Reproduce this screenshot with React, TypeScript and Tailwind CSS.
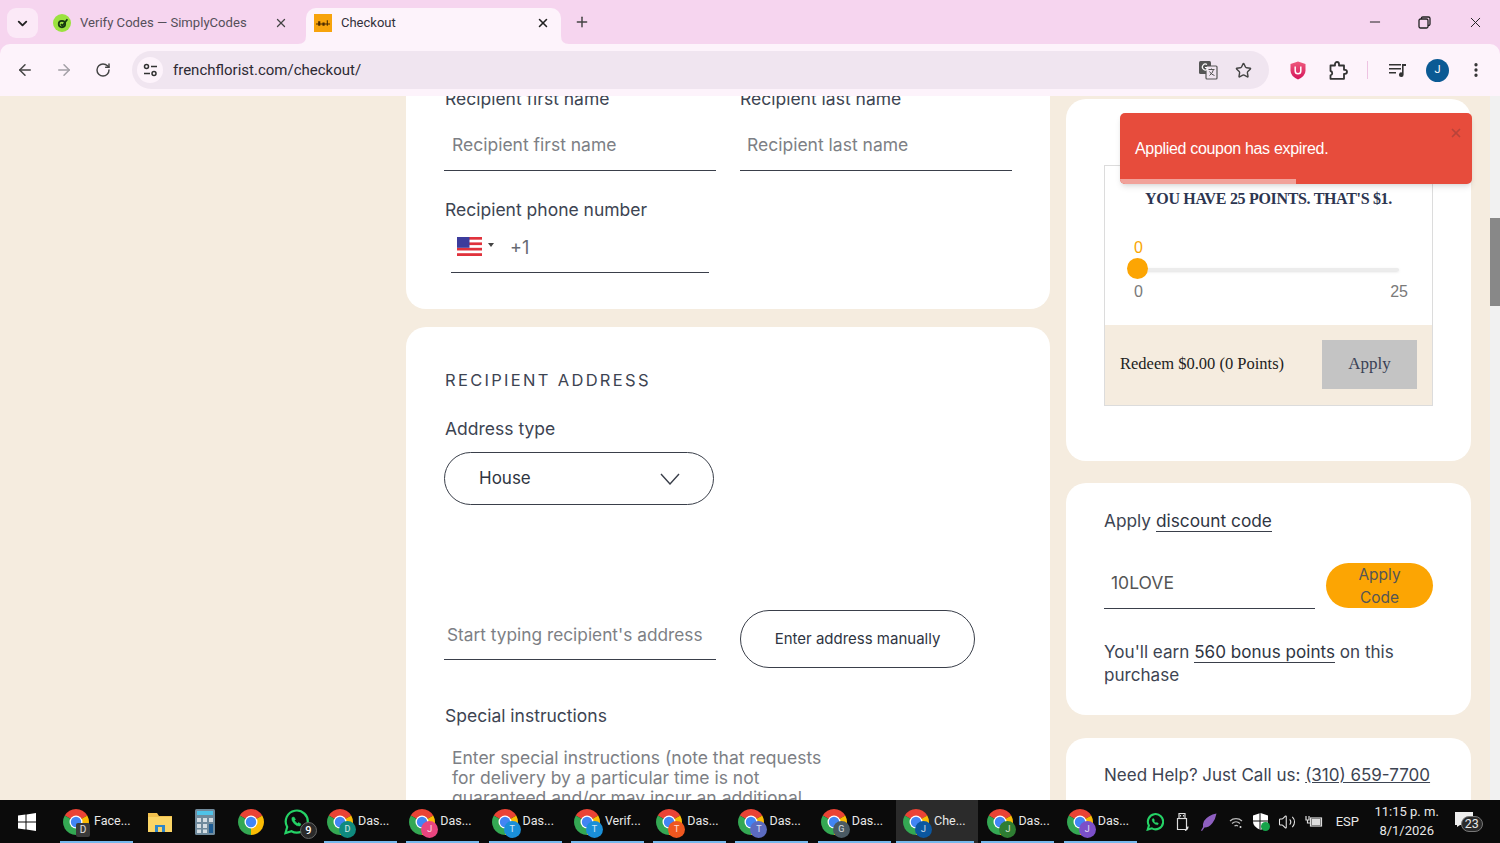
import { ArrowLeft, ArrowRight, RotateCw, X, Plus, ChevronDown, Star, EllipsisVertical, Minus, Volume2 } from 'lucide-react';

const FONT = "font-['Inter','Liberation_Sans',sans-serif]";

const taskItems = [
  { label: 'Das...', letter: 'D', badge: 'bg-[#0f8a7e]', cls: 'w-[73px] pl-[3px]' },
  { label: 'Das...', letter: 'J', badge: 'bg-[#e8457f]', cls: 'w-[73px] pl-[3px]' },
  { label: 'Das...', letter: 'T', badge: 'bg-[#1a8fd8]', cls: 'w-[73px] pl-[3px]' },
  { label: 'Verif...', letter: 'T', badge: 'bg-[#1a8fd8]', cls: 'w-[73px] pl-[3px]' },
  { label: 'Das...', letter: 'T', badge: 'bg-[#f0571f]', cls: 'w-[73px] pl-[3px]' },
  { label: 'Das...', letter: 'T', badge: 'bg-[#5c6bc0]', cls: 'w-[73px] pl-[3px]' },
  { label: 'Das...', letter: 'G', badge: 'bg-[#4a5a63]', cls: 'w-[73px] pl-[3px]' },
  { label: 'Che...', letter: 'J', badge: 'bg-[#0b57a0]', cls: 'w-[82px] pl-[7px] -ml-[4px] -mr-[6px] bg-[#2b2b2b]', line: 'right-[4px]' },
  { label: 'Das...', letter: 'J', badge: 'bg-[#2e7d32]', cls: 'w-[73px] pl-[6px]' },
  { label: 'Das...', letter: 'J', badge: 'bg-[#7b4fc9]', cls: 'w-[73px] pl-[3px]' },
];

function ChromeIcon({ size = 26 }: { size?: number }) {
  return (
    <svg width={size} height={size} viewBox="4 4 40 40">
      <path d="M24 24 L6.7 14 A20 20 0 0 1 41.3 14 Z" fill="#ea4335" />
      <path d="M24 24 L41.3 14 A20 20 0 0 1 24 44 Z" fill="#fbbc04" />
      <path d="M24 24 L24 44 A20 20 0 0 1 6.7 14 Z" fill="#34a853" />
      <circle cx="24" cy="24" r="10" fill="#fff" />
      <circle cx="24" cy="24" r="8" fill="#4285f4" />
    </svg>
  );
}

function TaskItem({ label, letter, badge, cls, line }: { label: string; letter: string; badge: string; cls: string; line?: string }) {
  return (
    <div className={`relative h-full shrink-0 flex items-center ${cls}`}>
      <div className="relative w-[26px] h-[26px] shrink-0">
        <ChromeIcon />
        <span className={`absolute -right-[3px] -bottom-[3px] w-[17px] h-[17px] rounded-full text-[9px] leading-[17px] text-center text-white/80 ${badge}`}>{letter}</span>
      </div>
      <span className="ml-[5px] text-[12.5px] text-[#e8e8e8] whitespace-nowrap">{label}</span>
      <span className={`absolute left-0 bottom-0 h-[2px] bg-[#76b9ed] ${line ?? 'right-0'}`} />
    </div>
  );
}

function UnderlineInput({ text, className }: { text: string; className: string }) {
  return <div className={`border-b border-[#3a3f4a] text-[#7d7f85] ${className}`}>{text}</div>;
}

function UsFlag() {
  return (
    <svg width="25" height="19" viewBox="0 0 25 19">
      <rect width="25" height="19" fill="#fff" />
      <rect y="0" width="25" height="2.7" fill="#e0323c" />
      <rect y="5.4" width="25" height="2.7" fill="#e0323c" />
      <rect y="10.8" width="25" height="2.7" fill="#e0323c" />
      <rect y="16.2" width="25" height="2.8" fill="#e0323c" />
      <rect width="12.5" height="10.8" fill="#3c3c9c" />
    </svg>
  );
}

function WhatsApp({ size, weight }: { size: number; weight: number }) {
  return (
    <svg width={size} height={size} viewBox="0 0 26 26" fill="none" stroke="#25d366" strokeWidth={weight}>
      <path d="M2.500 24 L4.200 18 A11 11 0 1 1 8.500 22.200 Z" />
      <path d="M9 8.500 Q8 11 11 14.500 Q14 17.500 17 17 L18 15 L15.500 13.500 L14.500 14.500 Q12.500 13.500 11.500 11.500 L12.500 10.500 L11 8 Z" fill="#25d366" strokeWidth="0.500" />
    </svg>
  );
}

function TabBar() {
  return (
    <div className="h-[44px] shrink-0 flex items-end relative">
      <div className="absolute left-[7px] top-[8px] w-[31px] h-[30px] rounded-[9px] bg-[#fbe9f7] flex items-center justify-center">
        <ChevronDown size={15} strokeWidth={3} className="text-[#222]" />
      </div>
      <div className="ml-[45px] w-[261px] h-[38px] flex items-center pb-[4px] text-[13.1px] text-[#55505a]">
        <div className="w-[18px] h-[18px] rounded-full bg-[#9be23f] ml-[8px] flex items-center justify-center shrink-0">
          <svg width="13" height="13" viewBox="0 0 12 12" fill="none" stroke="#163a10" strokeWidth="1.6">
            <circle cx="5.5" cy="6.5" r="3" />
            <path d="M4.500 6.500 L6 8 L10.500 2" />
          </svg>
        </div>
        <span className="ml-[9px] font-['Roboto',sans-serif] w-[194px] whitespace-nowrap">Verify Codes — SimplyCodes</span>
        <X size={14} strokeWidth={2.2} className="text-[#444]" />
      </div>
      <div className="relative w-[255px] h-[36px] bg-[#fdf3fb] rounded-t-[10px] flex items-center pl-[8px] pb-[6px] text-[13px] text-[#33303a]">
        <svg width="8" height="8" viewBox="0 0 8 8" className="absolute -left-[8px] bottom-0" fill="#fdf3fb">
          <path d="M8 0V8H0Q8 8 8 0Z" />
        </svg>
        <svg width="8" height="8" viewBox="0 0 8 8" className="absolute -right-[8px] bottom-0" fill="#fdf3fb">
          <path d="M0 0V8H8Q0 8 0 0Z" />
        </svg>
        <div className="w-[18px] h-[18px] bg-[#f7a30c] flex items-center justify-center shrink-0">
          <svg width="14" height="7" viewBox="0 0 13 6" fill="#4a2a00">
            <path d="M0 3h13v1H0zM2 1h2v4H2zM6 2h2v3H6zM10 0h1v5h-1z" />
          </svg>
        </div>
        <span className="ml-[9px] font-['Roboto',sans-serif] w-[195px]">Checkout</span>
        <X size={14} strokeWidth={2.6} className="text-[#222]" />
      </div>
      <Plus size={16} strokeWidth={2.2} className="ml-[13px] mb-[14px] text-[#444]" />
      <div className="ml-auto flex items-center h-full self-start text-[#222]">
        <Minus size={16} strokeWidth={1.5} className="mr-[35px]" />
        <svg width="13" height="13" viewBox="0 0 13 13" fill="none" stroke="#222" strokeWidth="1.3" className="mr-[36px]">
          <rect x="1" y="3" width="9" height="9" rx="1.5" />
          <path d="M3.500 3V2.200Q3.500 1 4.800 1H10.500Q12 1 12 2.500V8.300Q12 9.500 10 9.500" />
        </svg>
        <X size={17} strokeWidth={1.4} className="mr-[16px]" />
      </div>
    </div>
  );
}

function Toolbar() {
  return (
    <div className="h-[52px] shrink-0 bg-[#fdf3fb] rounded-t-[10px] flex items-center text-[#444]">
      <ArrowLeft size={18} strokeWidth={2} className="ml-[16px]" />
      <ArrowRight size={18} strokeWidth={2} className="ml-[21px] text-[#a3a0a6]" />
      <RotateCw size={16} strokeWidth={2.2} className="ml-[22px]" />
      <div className="ml-[21px] w-[1137px] h-[38px] rounded-full bg-[#f0e5f0] flex items-center">
        <div className="ml-[5px] w-[26px] h-[26px] rounded-full bg-[#fdf3fb] flex items-center justify-center">
          <svg width="15" height="14" viewBox="0 0 15 14" fill="none" stroke="#333" strokeWidth="1.5">
            <circle cx="3.5" cy="3.5" r="2" />
            <path d="M8 3.500h6M1 10.500h6" />
            <circle cx="11" cy="10.5" r="2" />
          </svg>
        </div>
        <span className="ml-[10px] text-[15px] font-['Roboto',sans-serif] text-[#2d2a33]">frenchflorist.com/checkout/</span>
        <svg width="20" height="20" viewBox="0 0 20 20" className="ml-auto">
          <rect x="1" y="1" width="12" height="13" rx="1.5" fill="#555" />
          <rect x="8" y="6" width="11" height="13" rx="1" fill="#f0e5f0" stroke="#555" strokeWidth="1.2" />
          <path d="M10.500 9.500h6M13.500 8.500v1M15.500 9.500q-1 4-4 6M11.500 11.500q1.500 3 5 4" stroke="#555" strokeWidth="1" fill="none" />
          <path d="M9 4.500a3 3 0 1 0 0 5V7.500H7" stroke="#fff" strokeWidth="1.1" fill="none" />
        </svg>
        <Star size={17} strokeWidth={2} className="ml-[17px] mr-[17px]" />
      </div>
      <svg width="16" height="19" viewBox="0 0 16 19" className="ml-[21px]">
        <defs>
          <linearGradient id="ublock" x1="0" y1="0" x2="0" y2="1">
            <stop offset="0" stopColor="#ef5a7d" />
            <stop offset="1" stopColor="#d4145a" />
          </linearGradient>
        </defs>
        <path d="M8 0.500 L15.500 3 V9.500 Q15.500 15 8 18.500 Q0.500 15 0.500 9.500 V3 Z" fill="url(#ublock)" />
        <path d="M5.200 5.500v4.500a2.800 2.800 0 0 0 5.600 0V5.500" fill="none" stroke="#fff" strokeWidth="1.5" />
      </svg>
      <svg width="19" height="19" viewBox="0 0 19 19" fill="none" stroke="#333" strokeWidth="1.8" className="ml-[23px]">
        <path d="M1.500 4.500h4.500V3a2 2 0 0 1 4 0v1.500h5v4.300h1a2 2 0 0 1 0 4h-1v5h-13.500v-3.500a2.200 2.200 0 0 0 0-4.300z" strokeLinejoin="round" />
      </svg>
      <div className="ml-[19px] w-[1px] h-[18px] bg-[#eec3e2]" />
      <svg width="18" height="14" viewBox="0 0 18 14" className="ml-[21px]" fill="#333">
        <path d="M0 1h12v1.600H0zM0 5h12v1.600H0zM0 9h7v1.600H0z" />
        <path d="M13 1h4v2h-2.400v8.500a2.300 2.300 0 1 1-1.600-2.100z" />
      </svg>
      <div className="ml-[19px] w-[23px] h-[23px] rounded-full bg-[#0b5a94] text-white text-[11px] flex items-center justify-center font-['Roboto',sans-serif]">J</div>
      <EllipsisVertical size={18} strokeWidth={2.4} className="ml-[18px] text-[#333]" />
    </div>
  );
}

function CheckoutColumn() {
  return (
    <div className={`w-[644px] shrink-0 text-[#3d4452] ${FONT}`}>
      <div className="h-[213px] bg-white rounded-b-[20px] pl-[38px] overflow-hidden">
        <div className="flex gap-[24px] -mt-[8px]">
          <div className="w-[272px]">
            <div className="pl-[1px] text-[17.5px] leading-[22px]">Recipient first name</div>
            <UnderlineInput text="Recipient first name" className="mt-[17px] h-[44px] pl-[8px] pt-[5px] text-[17.5px]" />
          </div>
          <div className="w-[272px]">
            <div className="text-[17.5px] leading-[22px]">Recipient last name</div>
            <UnderlineInput text="Recipient last name" className="mt-[17px] h-[44px] pl-[7px] pt-[5px] text-[17.5px]" />
          </div>
        </div>
        <div className="mt-[28px] pl-[1px] text-[17.5px] leading-[22px]">Recipient phone number</div>
        <div className="mt-[9px] ml-[7px] w-[258px] h-[43px] border-b border-[#3a3f4a] flex items-center pl-[6px] pb-[5px]">
          <div className="mb-[4px]"><UsFlag /></div>
          <span className="ml-[6px] mb-[7px] w-0 h-0 border-x-[3.5px] border-x-transparent border-t-[4px] border-t-[#444]" />
          <span className="ml-[16px] mb-[2px] text-[18px] text-[#666a72]">+1</span>
        </div>
      </div>
      <div className="mt-[18px] h-[520px] bg-white rounded-t-[20px] pl-[38px] pt-[42px]">
        <div className="pl-[1px] text-[16.5px] leading-[22px] tracking-[0.14em] text-[#3d4452]">RECIPIENT ADDRESS</div>
        <div className="mt-[27px] pl-[1px] text-[17.5px] leading-[22px]">Address type</div>
        <div className="mt-[12px] w-[270px] h-[53px] rounded-full border border-[#3a3f4a] flex items-center pl-[34px] pr-[33px] text-[17px] text-[#2f3542]">
          <span>House</span>
          <svg width="20" height="12" viewBox="0 0 20 12" fill="none" stroke="#3a3f4a" strokeWidth="1.4" className="ml-auto">
            <path d="M1 1 L10 11 L19 1" />
          </svg>
        </div>
        <div className="mt-[105px] flex gap-[24px] items-start">
          <UnderlineInput text="Start typing recipient's address" className="w-[272px] h-[50px] pl-[3px] pt-[12px] text-[17.3px] whitespace-nowrap" />
          <div className="w-[235px] h-[58px] rounded-full border border-[#3a3f4a] flex items-center justify-center text-[15px] text-[#2f3542]">Enter address manually</div>
        </div>
        <div className="mt-[37px] pl-[1px] text-[17.5px] leading-[22px]">Special instructions</div>
        <div className="mt-[21px] ml-[8px] w-[380px] text-[17.5px] leading-[20px] text-[#7d7f85]">
          Enter special instructions (note that requests for delivery by a particular time is not guaranteed and/or may incur an additional
        </div>
      </div>
    </div>
  );
}

function SideColumn() {
  return (
    <div className={`relative w-[405px] shrink-0 ml-[16px] text-[#3d4452] ${FONT}`}>
      <div className="mt-[3px] h-[362px] bg-white rounded-[20px] pl-[38px] pt-[66px]">
        <div className="w-[329px] h-[241px] border border-[#dcdcdc] flex flex-col">
          <div className="h-[159px] pt-[23px] relative">
            <div className="text-center text-[16px] leading-[20px] font-bold text-[#2d3550] font-['Liberation_Serif',serif] tracking-[-0.02em]">YOU HAVE 25 POINTS. THAT'S $1.</div>
            <div className="mt-[29px] pl-[33px] text-[#f9a602] text-[16px] leading-[20px] font-['Liberation_Sans',sans-serif]">
              <span className="relative -left-[4px]">0</span>
            </div>
            <div className="relative ml-[33px] mt-[10px] w-[261px] h-[3px] bg-[#ececec] rounded-full shadow-sm">
              <span className="absolute -left-[11px] -top-[10px] w-[21px] h-[21px] rounded-full bg-[#fca503]" />
            </div>
            <div className="mt-[11px] ml-[29px] mr-[24px] flex justify-between text-[16px] leading-[20px] text-[#7a7a7a] font-['Liberation_Sans',sans-serif]">
              <span>0</span>
              <span>25</span>
            </div>
          </div>
          <div className="flex-1 bg-[#f5ecdf] flex items-center pl-[15px] pr-[15px] pb-[2px] font-['Liberation_Serif',serif]">
            <span className="text-[16.5px] text-[#222]">Redeem $0.00 (0 Points)</span>
            <div className="ml-auto w-[95px] h-[49px] bg-[#c4c4c4] flex items-center justify-center text-[17px] text-[#3a4256]">Apply</div>
          </div>
        </div>
      </div>
      <div className="mt-[22px] h-[232px] bg-white rounded-[20px] pl-[38px] pt-[26px] pr-[38px]">
        <div className="text-[17.3px] leading-[24px]">
          Apply <span className="border-b border-[#3a3f4a] text-[#2f3542]">discount code</span>
        </div>
        <div className="mt-[30px] flex items-start gap-[11px]">
          <div className="w-[211px] h-[46px] border-b border-[#3a3f4a] pl-[7px] pt-[7px] text-[17.5px] text-[#555]">10LOVE</div>
          <div className="w-[107px] h-[45px] px-[24px] rounded-full bg-[#fca503] flex items-center justify-center text-center text-[15.5px] leading-[23px] text-[#555]">Apply Code</div>
        </div>
        <div className="mt-[31px] text-[17.1px] leading-[23px]">
          You'll earn <span className="border-b border-[#3a3f4a] text-[#2f3542]">560 bonus points</span> on this purchase
        </div>
      </div>
      <div className="mt-[23px] h-[120px] bg-white rounded-t-[20px] pl-[38px] pt-[25px] text-[17px] leading-[24px] whitespace-nowrap">
        Need Help? Just Call us: <span className="underline">(310) 659-7700</span>
      </div>
      <div className="absolute left-[54px] top-[17px] w-[352px] h-[71px] bg-[#e74c3c] rounded-[5px] shadow-md overflow-hidden font-['Liberation_Sans',sans-serif]">
        <div className="pl-[15px] pt-[26px] text-[16px] leading-[20px] text-white tracking-[-0.02em]">Applied coupon has expired.</div>
        <X size={14} strokeWidth={3} className="absolute right-[9px] top-[13px] text-[#b8433a]" />
        <div className="absolute left-0 bottom-0 w-[176px] h-[5px] bg-[#f1a29a]" />
      </div>
    </div>
  );
}

function Taskbar() {
  return (
    <div className="h-[43px] shrink-0 bg-[#0b0b0b] flex items-center text-white font-['Roboto',sans-serif] relative">
      <svg width="18" height="18" viewBox="0 0 18 18" fill="#fff" className="ml-[18px]">
        <path d="M0 2.500l7.500-1v7H0zM8.500 1.400L18 0v8.500H8.500zM0 9.500h7.500v7L0 15.500zM8.500 9.500H18V18l-9.500-1.400z" />
      </svg>
      <div className="ml-[24px] flex items-center h-full">
        <div className="relative h-full w-[73px] flex items-center pl-[3px]">
          <div className="relative w-[26px] h-[26px]">
            <ChromeIcon />
            <span className="absolute -right-[1px] -bottom-[2px] w-[14px] h-[14px] rounded-[2px] bg-[#3a3a3a] text-[10px] leading-[14px] text-center text-white/85">D</span>
          </div>
          <span className="ml-[5px] text-[12.5px] text-[#e8e8e8]">Face...</span>
          <span className="absolute left-0 right-0 bottom-0 h-[2px] bg-[#76b9ed]" />
        </div>
      </div>
      <svg width="24" height="22" viewBox="0 0 24 22" className="ml-[15px]">
        <path d="M0 2h9l2 3h13v16H0z" fill="#f2c14e" />
        <rect x="0" y="6" width="24" height="15" fill="#fbd566" />
        <rect x="7" y="14" width="10" height="7" fill="#2f86c9" />
        <rect x="10" y="16" width="4" height="5" fill="#fbd566" />
      </svg>
      <svg width="20" height="26" viewBox="0 0 20 26" className="ml-[23px]">
        <rect width="20" height="26" rx="1.500" fill="#6f8a9c" />
        <rect x="2" y="2" width="16" height="4" fill="#4fc3e8" />
        <rect x="2" y="9" width="4" height="4" fill="#d4dde3" />
        <rect x="8" y="9" width="4" height="4" fill="#d4dde3" />
        <rect x="14" y="9" width="4" height="4" fill="#d4dde3" />
        <rect x="2" y="15" width="4" height="4" fill="#d4dde3" />
        <rect x="8" y="15" width="4" height="4" fill="#d4dde3" />
        <rect x="14" y="15" width="4" height="9" fill="#1d5c94" />
        <rect x="2" y="20.500" width="4" height="3.500" fill="#d4dde3" />
        <rect x="8" y="20.500" width="4" height="3.500" fill="#d4dde3" />
      </svg>
      <div className="ml-[23px]"><ChromeIcon /></div>
      <div className="relative ml-[19px] w-[26px] h-[26px]">
        <WhatsApp size={26} weight={2.2} />
        <span className="absolute -right-[8px] -bottom-[4px] w-[17px] h-[17px] rounded-full bg-[#2a2a2a] border border-[#666] text-[11px] leading-[15px] text-center font-medium">9</span>
      </div>
      <div className="ml-[15px] flex items-center h-full gap-[9.3px]">
        {taskItems.map((item, i) => (
          <TaskItem key={i} {...item} />
        ))}
      </div>
      <div className="ml-[9px] flex items-center text-[#e8e8e8]">
        <WhatsApp size={18} weight={3} />
        <svg width="14" height="18" viewBox="0 0 14 18" fill="none" stroke="#ddd" strokeWidth="1.2" className="ml-[12px]">
          <rect x="3" y="0.500" width="6" height="5" />
          <path d="M1.500 5.500h9v11h-9zM4.500 2v1.500M7.500 2v1.500M12 13.500q0 3-3 4" />
        </svg>
        <svg width="17" height="18" viewBox="0 0 17 18" fill="#8e5fc0" className="ml-[10px]">
          <path d="M16.500 0.500Q8 2 4 8Q2.500 11 3 14L1 17.500L2 18L4.500 14.500Q9 14.500 12.500 10Q15.500 6 16.500 0.500Z" />
        </svg>
        <svg width="14" height="14" viewBox="0 0 14 14" fill="none" stroke="#bbb" strokeWidth="1.2" className="ml-[12px]">
          <path d="M1 6A9 9 0 0 1 13 6M3 8.500A6 6 0 0 1 11 8.500M5.500 11A3 3 0 0 1 9 11" />
          <circle cx="11.500" cy="12" r="1" fill="#ddd" stroke="none" />
        </svg>
        <div className="relative ml-[10px] w-[17px] h-[18px]">
          <svg width="15" height="17" viewBox="0 0 15 17" fill="#fff">
            <path d="M7.500 0 L15 2.500 V8.500 Q15 14 7.500 17 Q0 14 0 8.500 V2.500 Z" />
            <path d="M7 0v17M0 8h15" stroke="#0b0b0b" strokeWidth="1" />
          </svg>
          <span className="absolute right-0 bottom-0 w-[9px] h-[9px] rounded-full bg-[#16a34a]" />
        </div>
        <Volume2 size={18} strokeWidth={1.4} className="ml-[8px]" />
        <svg width="18" height="13" viewBox="0 0 18 13" fill="none" stroke="#ddd" strokeWidth="1.2" className="ml-[9px]">
          <rect x="5.500" y="3" width="11" height="8" />
          <rect x="6.500" y="4" width="9" height="6" fill="#ddd" stroke="none" />
          <path d="M1 1v4h3V1M2.500 5v3h3" />
        </svg>
        <span className="ml-[13px] text-[13px] w-[24px]">ESP</span>
        <div className="ml-[8px] w-[78px] text-center text-[13px] leading-[19px] -mt-[1px]">
          <div>11:15 p. m.</div>
          <div>8/1/2026</div>
        </div>
        <div className="relative ml-[9px] w-[20px] h-[20px]">
          <svg width="18" height="15" viewBox="0 0 18 15" fill="#eee">
            <path d="M0 0h18v13H5l-3 2v-2H0z" />
          </svg>
          <span className="absolute left-[6px] top-[4px] w-[22px] h-[16px] rounded-full bg-[#2a2a2a] border border-[#777] text-[12.5px] leading-[14px] text-center">23</span>
        </div>
      </div>
    </div>
  );
}

export default function App() {
  return (
    <div className="w-[1500px] h-[843px] flex flex-col overflow-hidden bg-[#f6d5ef]">
      <TabBar />
      <Toolbar />
      <div className="h-[704px] shrink-0 flex bg-[#f5ecdf] overflow-hidden">
        <div className="w-[406px] shrink-0" />
        <CheckoutColumn />
        <SideColumn />
        <div className="ml-[19px] w-[10px] shrink-0 bg-[#f1f1f1] pt-[122px]">
          <div className="h-[88px] bg-[#888]" />
        </div>
      </div>
      <Taskbar />
    </div>
  );
}
